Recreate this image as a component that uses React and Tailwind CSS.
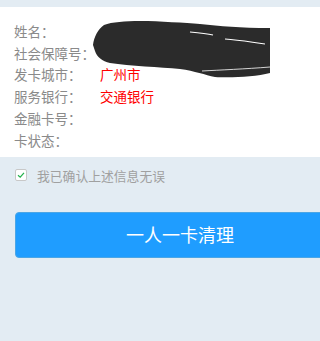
import React from 'react';

const rows = [
    { label: '姓名：', value: '' },
    { label: '社会保障号：', value: '3' },
    { label: '发卡城市：', value: '广州市' },
    { label: '服务银行：', value: '交通银行' },
    { label: '金融卡号：', value: '' },
    { label: '卡状态：', value: '' },
];

// hand-drawn redaction scribble over the name / id number
const Redaction = () => (
    <svg className="absolute left-[90px] top-[8px]" width="180" height="67" viewBox="0 0 180 67">
        <path
            d="M3 30 C4 22 8 14 14 10 C22 7 35 6 50 6 C70 6 95 8 110 9 C130 11 150 13 180 13 L180 58 C165 62 140 63 125 62 C115 60 105 56 90 54 C70 52 40 51 20 48 C12 46 7 42 5 36 Z"
            fill="#2b2b2b"
        />
        <path d="M100 17 C110 18 118 19 123 20" stroke="#ffffff" strokeWidth="1.2" fill="none" />
        <path d="M135 24 C150 25 160 27 175 29" stroke="#ffffff" strokeWidth="1.2" fill="none" />
        <path d="M112 56 C130 55 155 54 180 52" stroke="#ffffff" strokeWidth="0.8" fill="none" />
    </svg>
);

const App = () => {
    return (
        <div className="min-h-screen w-full overflow-hidden bg-[#e3ecf3]" style={{ fontFamily: '"Noto Sans CJK SC", "Noto Sans", sans-serif' }}>
            <div className="w-[360px] pt-[7px]">
                {/* Info panel */}
                <div className="relative bg-white pl-[14px] pt-[13px] pb-[6px]">
                    {rows.map((row) => (
                        <div key={row.label} className="flex h-[21.8px] items-center text-[13.5px]">
                            <span className="w-[86px] text-[#8a8a8a]">{row.label}</span>
                            <span className="text-[#ff0000]">{row.value}</span>
                        </div>
                    ))}
                    <Redaction />
                </div>

                {/* Confirm */}
                <div className="flex items-center gap-[10px] pl-[15px] pt-[9px]">
                    <span className="flex h-[12px] w-[12px] items-center justify-center rounded-[2px] border border-[#c8c8c8] bg-white">
                        <svg width="8" height="8" viewBox="0 0 8 8">
                            <path d="M1 4.2 L3.2 6.2 L7 1.8" stroke="#22b14c" strokeWidth="1.2" fill="none" />
                        </svg>
                    </span>
                    <span className="text-[12.8px] text-[#a0a0a0]">我已确认上述信息无误</span>
                </div>

                {/* Action */}
                <div className="px-[15px] pt-[27px]">
                    <button className="h-[46px] w-full rounded-[4px] border border-[#4ba6e6] bg-[#1f9dff] text-[18px] text-white">
                        一人一卡清理
                    </button>
                </div>
            </div>
        </div>
    );
};

export default App;
